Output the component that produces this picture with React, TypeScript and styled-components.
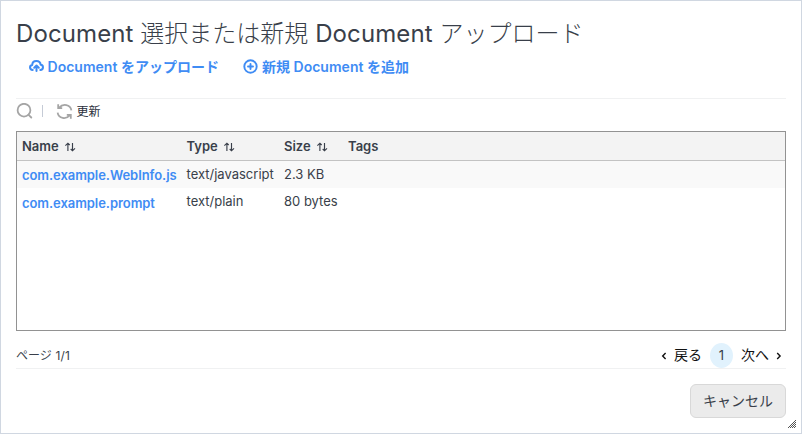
import React from "react";
import styled, { createGlobalStyle } from "styled-components";

const GlobalStyle = createGlobalStyle`
  * { box-sizing: border-box; }
  body { margin: 0; background: #fff; }
`;

const Dialog = styled.div`
  position: relative;
  width: 802px;
  height: 434px;
  padding: 13px 15px 0;
  border: 1px solid #d0d7e1;
  background: #fff;
  color: #393f4a;
  font-family: Inter, "Noto Sans CJK JP", sans-serif;
  font-size: 13px;
  overflow: hidden;
  white-space: nowrap;
`;

const Title = styled.h1`
  margin: 0;
  height: 36px;
  font-size: 24px;
  line-height: 36px;
  font-weight: 400;
  letter-spacing: 0.1px;
`;

const Jp = styled.span<{ $weight?: number; $spacing?: number }>`
  font-family: "Noto Sans CJK JP", sans-serif;
  font-weight: ${(p) => p.$weight ?? 300};
  letter-spacing: ${(p) => p.$spacing ?? 0}px;
`;

const Actions = styled.div`
  display: flex;
  gap: 24px;
  height: 49px;
  padding: 5px 12.5px 0;
  border-bottom: 1px solid #f0f1f2;
`;

const Action = styled.a`
  display: flex;
  align-items: center;
  gap: 4px;
  height: 22px;
  color: #3f8cf4;
  font-size: 14px;
  font-weight: 600;
  letter-spacing: 0.02px;
`;

const Toolbar = styled.div`
  display: flex;
  align-items: center;
  height: 32px;
  padding-bottom: 8px;
  color: #2b303b;
  font-size: 12px;
`;

const Divider = styled.i`
  width: 1px;
  height: 12px;
  margin: 0 12.5px 0 9px;
  background: #c5cbd6;
`;

const RefreshLabel = styled.span`
  margin: -1px 0 0 4px;
`;

const Grid = styled.div`
  height: 200px;
  border: 1px solid #929292;
`;

const Row = styled.div<{ $shade?: boolean }>`
  display: grid;
  grid-template-columns: 164.5px 97.5px 64px 1fr;
  height: 27px;
  padding-left: 5px;
  line-height: 27px;
  background: ${(p) => (p.$shade ? "#f9f9f9" : "#fff")};
`;

const HeaderRow = styled(Row)`
  height: 29px;
  line-height: 28px;
  border-bottom: 1px solid #c3c3c3;
  background: #f3f3f3;
  font-weight: 600;
`;

const HeaderCell = styled.div`
  display: flex;
  align-items: center;
  gap: 5px;

  svg {
    margin-top: 1px;
  }
`;

const DocLink = styled.a<{ $drop: number }>`
  padding-top: ${(p) => p.$drop}px;
  color: #3f8cf4;
  font-weight: 600;
  letter-spacing: -0.06px;
`;

const Footer = styled.div`
  display: flex;
  justify-content: space-between;
  height: 38px;
  padding-top: 12px;
  border-bottom: 1px solid #f0f1f2;
`;

const PageInfo = styled.div`
  font-size: 12px;
  line-height: 23px;
  letter-spacing: 0.25px;
`;

const Pager = styled.div`
  display: flex;
  align-items: center;
  height: 25px;
  padding-right: 4px;
  color: #111;
  font-size: 14px;
  line-height: 21px;
`;

const CurrentPage = styled.span`
  width: 23px;
  height: 25px;
  margin: 0 8px;
  border-radius: 50%;
  background: #e1f2fd;
  color: #393f4a;
  font-size: 13px;
  line-height: 25px;
  text-align: center;
`;

const ButtonBar = styled.div`
  display: flex;
  justify-content: flex-end;
  padding-top: 15px;
`;

const CancelButton = styled.button`
  width: 96px;
  height: 34px;
  padding: 0 0 2px 0;
  border: 1px solid #d8d8d8;
  border-radius: 6px;
  background: #ebebeb;
  color: #393f4a;
  font-size: 14px;
  line-height: 30px;
`;

const ResizeGrip = styled.svg`
  position: absolute;
  right: 5px;
  bottom: 5px;
`;

const UploadIcon = () => (
  <svg width="15" height="14" viewBox="0 0 15 14" fill="none" stroke="currentColor" strokeWidth="2" strokeLinecap="round" strokeLinejoin="round">
    <path d="M3.7 11C0.3 10.7 .2 6.6 3.2 6C3.4 0.9 11 .6 11.7 5.8C14.8 6.1 14.8 10.6 11.3 11" />
    <path d="M7.5 12V7M5.2 8.8L7.5 6.5L9.8 8.8" />
  </svg>
);

const PlusIcon = () => (
  <svg width="15" height="15" viewBox="0 0 15 15" fill="none" stroke="currentColor" strokeWidth="1.9">
    <circle cx="7.5" cy="7.5" r="6.2" />
    <path d="M7.5 5v5M5 7.5h5" strokeLinecap="round" />
  </svg>
);

const SearchIcon = () => (
  <svg width="17" height="17" viewBox="0 0 17 17" fill="none" stroke="#a5a5a5" strokeWidth="1.8" strokeLinecap="round">
    <circle cx="8" cy="7.2" r="6.4" />
    <path d="M12.6 11.8L15.3 14.5" />
  </svg>
);

const RefreshIcon = () => (
  <svg width="17" height="17" viewBox="0 0 17 17" fill="none" stroke="#a5a5a5" strokeWidth="1.8">
    <path d="M2.2 1.2V5.2H6.2M3 4.8C7 .2 14.4 1.4 15.4 7.4M14.8 15.8V11.8H10.8M14 12.2C10 16.8 2.6 15.6 1.6 9.6" />
  </svg>
);

const SortIcon = () => (
  <svg width="12" height="12" viewBox="0 0 12 12" fill="none" stroke="currentColor" strokeWidth="1.15">
    <path d="M3.9 10V2.2M1.4 4.7L3.9 2.2L5.7 4M8.5 2V9.8M6.7 8L8.5 9.8L11 7.3" />
  </svg>
);

const Chevron = ({ next }: { next?: boolean }) => (
  <svg width="6" height="9" viewBox="0 0 6 9" fill="none" stroke="currentColor" strokeWidth="1.4">
    <path d={next ? "M1.2 2.1L4.1 5L1.2 7.9" : "M4.6 2.1L1.7 5L4.6 7.9"} />
  </svg>
);

const PrevLabel = styled(Jp)`
  margin: -3px 0 0 7px;
`;

const NextLabel = styled(Jp)`
  margin: -3px 7px 0 0;
`;

const documents = [
  { name: "com.example.WebInfo.js", type: "text/javascript", size: "2.3 KB" },
  { name: "com.example.prompt", type: "text/plain", size: "80 bytes" },
];

export default function App() {
  return (
    <Dialog>
      <GlobalStyle />
      <Title>
        Document <Jp>選択または新規</Jp> Document <Jp>アップロード</Jp>
      </Title>
      <Actions>
        <Action>
          <UploadIcon />
          <span>Document <Jp $weight={700}>をアップロード</Jp></span>
        </Action>
        <Action>
          <PlusIcon />
          <span><Jp $weight={700}>新規</Jp> Document <Jp $weight={700}>を追加</Jp></span>
        </Action>
      </Actions>
      <Toolbar>
        <SearchIcon />
        <Divider />
        <RefreshIcon />
        <RefreshLabel><Jp $weight={400}>更新</Jp></RefreshLabel>
      </Toolbar>
      <Grid>
        <HeaderRow>
          <HeaderCell>Name <SortIcon /></HeaderCell>
          <HeaderCell>Type <SortIcon /></HeaderCell>
          <HeaderCell>Size <SortIcon /></HeaderCell>
          <HeaderCell>Tags</HeaderCell>
        </HeaderRow>
        {documents.map((doc, i) => (
          <Row key={doc.name} $shade={i % 2 === 0}>
            <DocLink $drop={1 + i}>{doc.name}</DocLink>
            <span>{doc.type}</span>
            <span>{doc.size}</span>
          </Row>
        ))}
      </Grid>
      <Footer>
        <PageInfo><Jp $weight={400}>ページ</Jp> 1/1</PageInfo>
        <Pager>
          <Chevron />
          <PrevLabel $weight={400}>戻る</PrevLabel>
          <CurrentPage>1</CurrentPage>
          <NextLabel $weight={400}>次へ</NextLabel>
          <Chevron next />
        </Pager>
      </Footer>
      <ButtonBar>
        <CancelButton><Jp $weight={400}>キャンセル</Jp></CancelButton>
      </ButtonBar>
      <ResizeGrip width="8" height="8" viewBox="0 0 8 8" stroke="#555" strokeWidth="1">
        <path d="M0 8L8 0M2 8L8 2M4 8L8 4M6 8L8 6" />
      </ResizeGrip>
    </Dialog>
  );
}
